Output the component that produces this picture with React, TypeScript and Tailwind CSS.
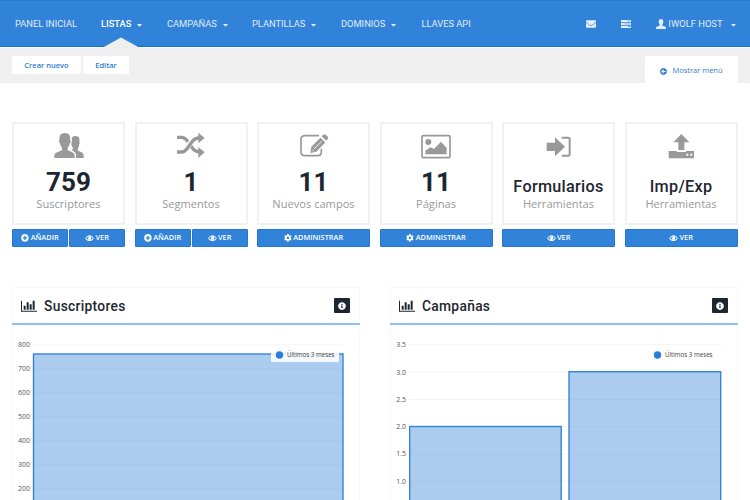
import type { ReactNode } from "react";
import { FaCog, FaEnvelope, FaInfoCircle, FaPlusCircle, FaArrowCircleLeft } from "react-icons/fa";

const roboto = "font-['Roboto',sans-serif]";

function Caret() {
  return (
    <svg viewBox="0 0 5 3" className="mt-[2px] h-[3px] w-[5px] shrink-0" fill="currentColor">
      <path d="M0 0H5L2.5 2.8Z" />
    </svg>
  );
}

function Eye() {
  return (
    <svg viewBox="0 0 27 20" className="h-[6.5px] w-[9px]" fill="currentColor">
      <path d="M0 10Q5 1 13.5 1Q22 1 27 10Q22 19 13.5 19Q5 19 0 10Z" />
      <path d="M3 10Q5 6 8 4Q6 12 11 15Q6 14 3 10ZM24 10Q22 6 19 4Q21 12 16 15Q21 14 24 10Z" fill="#3182d9" />
      <path d="M10 9Q10 5 14 5" fill="none" stroke="#3182d9" strokeWidth="1.6" />
    </svg>
  );
}

function Glyph({ children }: { children: ReactNode }) {
  return (
    <svg viewBox="0 0 90 81" className="h-[27px] w-[30px] shrink-0 text-[#999]" fill="currentColor">
      {children}
    </svg>
  );
}

const people = (
  <Glyph>
    <path d="M1 78V69Q3 62 13 59L24 55V47Q19 42 18 34Q15 32 15 27Q15 23 17 23Q13 4 33 3Q51 4 48 23Q51 24 50 29Q49 33 47 35Q46 43 41 47V55L54 60Q62 63 62 71V78Z" />
    <path d="M53 17Q57 11 65 12Q79 13 76 29Q79 33 75 39Q75 46 72 49V56L83 61Q89 64 89 71V78H66V69Q66 61 57 57L52 54Q57 52 57 48Q53 44 52 36Q53 30 54 26Z" />
  </Glyph>
);

const shuffle = (
  <Glyph>
    <path d="M3 16H18Q28 17 38 32L48 47Q56 59 69 60" fill="none" stroke="currentColor" strokeWidth="10" />
    <path d="M24 54Q30 51 36 43L46 29Q50 23 56 20" fill="none" stroke="#fff" strokeWidth="16" />
    <path d="M3 60H18Q28 59 37 45L47 31Q56 18 69 18" fill="none" stroke="currentColor" strokeWidth="10" />
    <path d="M67 2 86 18 67 34ZM67 45 86 61 67 78Z" />
  </Glyph>
);

const compose = (
  <Glyph>
    <path d="M60 11H18Q6 11 6 22V60Q6 71 18 71H55Q67 71 67 60V50" fill="none" stroke="currentColor" strokeWidth="5" />
    <path d="M34 63 37 44 64 17 79 31 52 59ZM68 13 73 8Q77 5 80 8L87 15Q89 18 86 21L82 26Z" />
    <path d="M45 51 68 28M40 54 44 58" stroke="#fff" strokeWidth="2.5" />
  </Glyph>
);

const picture = (
  <Glyph>
    <rect x="3" y="11" width="84" height="66" rx="4" fill="none" stroke="currentColor" strokeWidth="5" />
    <circle cx="22" cy="30" r="9" />
    <path d="M13 67V56L28 46 39 51 60 29 77 48V67Z" />
  </Glyph>
);

const login = (
  <Glyph>
    <path d="M8 32H33V16L63 44 33 73V57H8Z" />
    <path d="M53 17H72Q77 17 77 22V66Q77 71 72 71H53" fill="none" stroke="currentColor" strokeWidth="6" />
  </Glyph>
);

const upload = (
  <Glyph>
    <path d="M46 6 70 31H55V54H37V31H22Z" />
    <path d="M8 57H32V60H60V57H84V77Q84 79 81 79H11Q8 79 8 76Z" />
    <path d="M61 65H67V71H61ZM73 65H79V71H73Z" fill="#fff" />
  </Glyph>
);

const nav = [
  { label: "PANEL INICIAL", width: "w-[86px]" },
  { label: "LISTAS", width: "w-[66px]", caret: true, active: true },
  { label: "CAMPAÑAS", width: "w-[85px]", caret: true },
  { label: "PLANTILLAS", width: "w-[89px]", caret: true },
  { label: "DOMINIOS", width: "w-[80.5px]", caret: true },
  { label: "LLAVES API", width: "w-[60px]" },
];

const add = { icon: <FaPlusCircle />, label: "AÑADIR" };
const view = { icon: <Eye />, label: "VER" };
const manage = { icon: <FaCog />, label: "ADMINISTRAR" };

const cards = [
  { icon: people, value: "759", label: "Suscriptores", actions: [add, view] },
  { icon: shuffle, value: "1", label: "Segmentos", actions: [add, view] },
  { icon: compose, value: "11", label: "Nuevos campos", actions: [manage] },
  { icon: picture, value: "11", label: "Páginas", actions: [manage] },
  { icon: login, title: "Formularios", label: "Herramientas", actions: [view] },
  { icon: upload, title: "Imp/Exp", label: "Herramientas", actions: [view] },
];

function Header() {
  return (
    <nav className={`${roboto} flex h-[47px] border-t border-b border-t-[#2b7ad0] border-b-[#1b71d0] bg-[#3182d9] pl-[15px] text-[9.3px] text-[#e3edfa]`}>
      {nav.map((n) => (
        <div key={n.label} className={`${n.width} relative flex shrink-0 items-center gap-[6px] pt-[1px] whitespace-nowrap ${n.active ? "font-medium text-white" : ""}`}>
          {n.label}
          {n.caret && <Caret />}
          {n.active && (
            <svg viewBox="0 0 38 11" className="absolute -bottom-[2px] left-px h-[11px] w-[38px]">
              <path d="M0 11 19 0.5 38 11Z" fill="#efefef" />
            </svg>
          )}
        </div>
      ))}
      <div className="ml-auto flex items-center pt-[1px] pr-[14px]">
        <FaEnvelope className="mr-[25px] h-[10px] w-[10px]" />
        <svg viewBox="0 0 30 24" className="mr-[25px] h-[8px] w-[10px]" fill="currentColor">
          <path d="M0 0H30V7H0ZM0 9H30V15H0ZM0 17H30V24H0Z" />
          <path d="M18 2H28V4H18ZM10 11H28V13H10ZM21 19H28V21H21Z" fill="#3182d9" />
        </svg>
        <svg viewBox="0 0 30 30" className="mr-[2px] h-[10px] w-[10px]" fill="currentColor">
          <path d="M0 30V26Q1 23 6 22L11 20V17Q8 13 8 8Q8 0 15 0Q22 0 22 8Q22 13 19 17V20L24 22Q29 23 30 26V30Z" />
        </svg>
        <span className="mr-[8.5px] text-[9.4px]">IWOLF HOST</span>
        <Caret />
      </div>
    </nav>
  );
}

function Panel({ title, labels, step, x0, right, bars }: { title: string; labels: string[]; step: number; x0: number; right: number; bars: { x: number; y: number; w: number }[] }) {
  return (
    <section className="h-[213px] w-[348px] border-x border-t border-[#f8f8f8]">
      <header className="-mx-px flex h-[37px] items-center border-b-2 border-[#8fc0f2] pr-[10px] pl-[9px] text-[#1d2731]">
        <svg viewBox="0 0 48 36" className="h-[12px] w-[16px]" fill="currentColor">
          <path d="M0 2H3V32H48V35H0ZM8 17H14V29H8ZM17 7H23V29H17ZM26 13H32V29H26ZM35 2H41V29H35Z" />
        </svg>
        <h2 className={`${roboto} ml-[7px] pt-[2px] text-[13.8px] leading-none font-medium tracking-[0.3px]`}>{title}</h2>
        <span className="ml-auto flex h-[15px] w-[16px] items-center justify-center rounded-[1px] bg-[#1d2731] text-white">
          <FaInfoCircle className="h-[8px] w-[8px]" />
        </span>
      </header>
      <svg viewBox="0 0 346 175" className="h-[175px] w-[346px] font-['Open_Sans',sans-serif] text-[7px]">
        {labels.map((l, i) => (
          <line key={l} x1={x0} x2={right} y1={19.8 + i * step} y2={19.8 + i * step} stroke="#f4f4f4" />
        ))}
        {bars.map((b) => (
          <rect key={b.x} x={b.x} y={b.y} width={b.w} height="250" fill="#2f80d8" fillOpacity="0.4" stroke="#3584d8" strokeWidth="1.4" />
        ))}
        {labels.map((l, i) => (
          <text key={l} x={x0 - 3} y={22.2 + i * step} textAnchor="end" fill="#555">{l}</text>
        ))}
        <rect x={right - 72} y="24" width="68" height="13" rx="1" fill="#fff" fillOpacity="0.87" />
        <circle cx={right - 63.5} cy="30" r="3.7" fill="#2a7edb" />
        <text x={right - 56} y="32.2" fontSize="6.2" fill="#444">Últimos 3 meses</text>
      </svg>
    </section>
  );
}

export default function App() {
  return (
    <div className="h-[500px] w-[750px] overflow-hidden bg-white font-['Open_Sans',sans-serif]">
      <Header />
      <div className="flex h-[36px] items-start border-t border-white bg-[#efefef] pt-[8px] pr-[12px] pl-[12px] text-[7.5px] text-[#2e7bd0]">
        <button className="mr-[2px] h-[18px] w-[69px] rounded-[1px] bg-white pt-[2px] font-semibold">Crear nuevo</button>
        <button className="h-[18px] w-[46px] rounded-[1px] bg-white pt-[2px] font-semibold">Editar</button>
        <button className="ml-auto flex h-[27px] w-[93px] items-center justify-center gap-[5px] rounded-t-[1px] bg-white pt-[3px]">
          <FaArrowCircleLeft className="h-[7px] w-[7px]" />
          Mostrar menú
        </button>
      </div>

      <main className="pt-[38.5px] pr-[12.5px] pl-[12px]">
        <div className="flex justify-between">
          {cards.map((c, i) => (
            <article key={i} className="w-[113px]">
              <div className="flex h-[103.5px] flex-col items-center border-2 border-[#f1f1f1] pt-[8px]">
                {c.icon}
                <div className="flex h-[39px] flex-col justify-end">
                  {c.value ? (
                    <strong className={`${roboto} text-[26px] leading-[32px] font-bold text-[#1d2731]`}>{c.value}</strong>
                  ) : (
                    <strong className={`${roboto} mb-[1px] text-[16.2px] leading-[20px] font-medium tracking-[0.3px] text-[#1d2731]`}>{c.title}</strong>
                  )}
                </div>
                <span className="-mt-[1px] text-[11.1px] leading-[14px] whitespace-nowrap text-[#999]">{c.label}</span>
              </div>
              <div className="mt-[4px] flex h-[18px] gap-px">
                {c.actions.map((a) => (
                  <button key={a.label} className="flex flex-1 items-center justify-center gap-[1.5px] rounded-[1px] border border-[#2478d4] bg-[#3182d9] text-[7.4px] font-semibold text-white">
                    <span className="text-[7.8px]">{a.icon}</span>
                    {a.label}
                  </button>
                ))}
              </div>
            </article>
          ))}
        </div>
        <div className="mt-[40px] flex gap-[30px]">
          <Panel title="Suscriptores" labels={["800", "700", "600", "500", "400", "300", "200"]} step={24} x0={20} right={330} bars={[{ x: 20.5, y: 29, w: 309.5 }]} />
          <Panel title="Campañas" labels={["3.5", "3.0", "2.5", "2.0", "1.5", "1.0"]} step={27.3} x0={18} right={330} bars={[{ x: 18.7, y: 101.5, w: 151.5 }, { x: 178, y: 46.7, w: 151.7 }]} />
        </div>
      </main>
    </div>
  );
}
